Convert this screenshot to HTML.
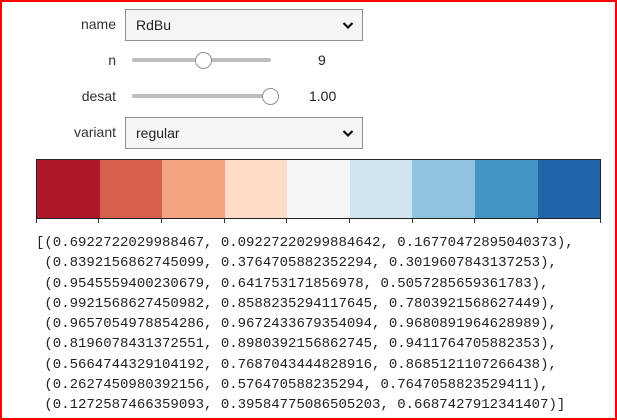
<!DOCTYPE html>
<html><head><style>
html,body{margin:0;padding:0;}
body{width:617px;height:420px;position:relative;background:#fff;overflow:hidden;font-family:"Liberation Sans",sans-serif;}
.frame{position:absolute;left:0;top:0;width:613px;height:416px;border:2px solid #f00;}
.lbl{position:absolute;right:501px;font-size:14px;color:#333;text-align:right;}
.sel{position:absolute;left:125px;width:238px;height:32px;border:1px solid #8f8f8f;background:#f5f5f5;box-sizing:border-box;font-size:14px;color:#222;padding-left:10px;line-height:30px;}
.sel svg{position:absolute;right:8px;top:11px;}
.track{position:absolute;left:132px;width:139px;height:4px;background:#bdbdbd;border-radius:2px;}
.thumb{position:absolute;width:17px;height:17px;border:1px solid #909090;border-radius:50%;background:#fff;box-sizing:border-box;}
.val{position:absolute;font-size:14px;color:#222;}
.bar{position:absolute;left:36px;top:159px;width:565px;height:60px;border:1px solid #222;box-sizing:border-box;display:flex;}
.bar div{flex:1;}
.tick{position:absolute;top:219px;width:1px;height:4px;background:#333;}
pre{position:absolute;left:36px;top:233px;margin:0;font-family:"Liberation Mono",monospace;font-size:14px;line-height:20.3px;color:#222;}
</style></head><body>
<div class="frame"></div>
<div class="lbl" style="top:16px">name</div>
<div class="sel" style="top:9px">RdBu<svg width="12" height="9" viewBox="0 0 12 9"><path d="M1.5 2 L6 6.5 L10.5 2" stroke="#111" stroke-width="2.2" fill="none"/></svg></div>
<div class="lbl" style="top:52px">n</div>
<div class="track" style="top:58px"></div>
<div class="thumb" style="left:195px;top:52px"></div>
<div class="val" style="left:318px;top:52px">9</div>
<div class="lbl" style="top:88px">desat</div>
<div class="track" style="top:94px"></div>
<div class="thumb" style="left:262px;top:88px"></div>
<div class="val" style="left:309px;top:88px">1.00</div>
<div class="lbl" style="top:124px">variant</div>
<div class="sel" style="top:117px">regular<svg width="12" height="9" viewBox="0 0 12 9"><path d="M1.5 2 L6 6.5 L10.5 2" stroke="#111" stroke-width="2.2" fill="none"/></svg></div>
<div class="bar">
<div style="background:#b0172b"></div><div style="background:#d6604d"></div><div style="background:#f3a582"></div><div style="background:#fddbc7"></div><div style="background:#f7f6f6"></div><div style="background:#d1e5f0"></div><div style="background:#91c4de"></div><div style="background:#4393c3"></div><div style="background:#2166ab"></div>
</div>
<div class="tick" style="left:36px"></div><div class="tick" style="left:98px"></div><div class="tick" style="left:161px"></div><div class="tick" style="left:224px"></div><div class="tick" style="left:286px"></div><div class="tick" style="left:349px"></div><div class="tick" style="left:412px"></div><div class="tick" style="left:474px"></div><div class="tick" style="left:537px"></div><div class="tick" style="left:600px"></div>
<pre>[(0.6922722029988467, 0.09227220299884642, 0.16770472895040373),
 (0.8392156862745099, 0.3764705882352294, 0.3019607843137253),
 (0.9545559400230679, 0.641753171856978, 0.5057285659361783),
 (0.9921568627450982, 0.8588235294117645, 0.7803921568627449),
 (0.9657054978854286, 0.9672433679354094, 0.9680891964628989),
 (0.8196078431372551, 0.8980392156862745, 0.9411764705882353),
 (0.5664744329104192, 0.7687043444828916, 0.8685121107266438),
 (0.2627450980392156, 0.576470588235294, 0.7647058823529411),
 (0.1272587466359093, 0.39584775086505203, 0.6687427912341407)]</pre>
</body></html>
